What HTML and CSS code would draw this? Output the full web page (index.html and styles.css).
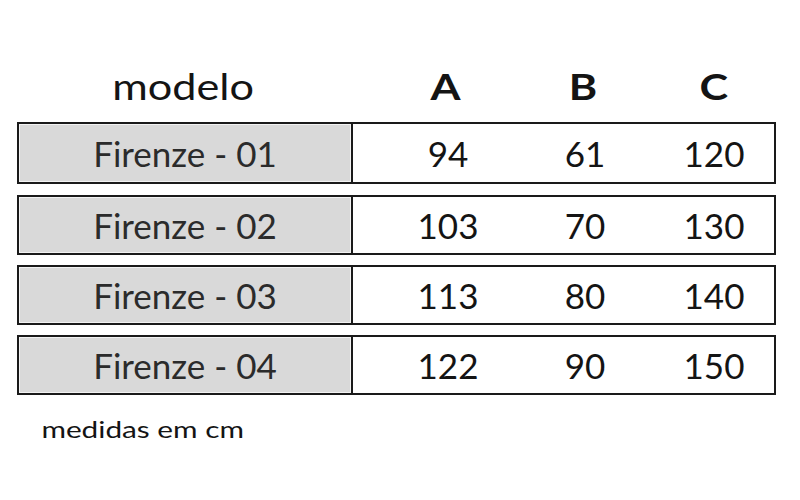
FILE: index.html
```html
<!DOCTYPE html>
<html lang="pt">
<head>
<meta charset="utf-8">
<title>Tabela de medidas</title>
<link rel="stylesheet" href="styles.css">
</head>
<body>
<div class="sheet">
  <div class="head">
    <div class="name-col"><span class="t">modelo</span></div>
    <div class="vals">
      <div class="v"><span class="t b">A</span></div>
      <div class="v"><span class="t b">B</span></div>
      <div class="v"><span class="t b">C</span></div>
    </div>
  </div>
  <div class="row first">
    <div class="name-col cell"><span>Firenze - 01</span></div>
    <div class="vals">
      <div class="v"><span>94</span></div>
      <div class="v"><span>61</span></div>
      <div class="v"><span>120</span></div>
    </div>
  </div>
  <div class="row">
    <div class="name-col cell"><span>Firenze - 02</span></div>
    <div class="vals">
      <div class="v"><span>103</span></div>
      <div class="v"><span>70</span></div>
      <div class="v"><span>130</span></div>
    </div>
  </div>
  <div class="row">
    <div class="name-col cell"><span>Firenze - 03</span></div>
    <div class="vals">
      <div class="v"><span>113</span></div>
      <div class="v"><span>80</span></div>
      <div class="v"><span>140</span></div>
    </div>
  </div>
  <div class="row">
    <div class="name-col cell"><span>Firenze - 04</span></div>
    <div class="vals">
      <div class="v"><span>122</span></div>
      <div class="v"><span>90</span></div>
      <div class="v"><span>150</span></div>
    </div>
  </div>
  <div class="note"><span class="t wide">medidas em cm</span></div>
</div>
</body>
</html>
```
FILE: styles.css
```css
* { box-sizing: border-box; }
html, body { margin: 0; padding: 0; background: #fff; }
body {
  font-family: Lato, "Open Sans", sans-serif;
  color: #141414;
  width: 800px;
  height: 500px;
  overflow: hidden;
}
.sheet {
  padding: 60px 0 0 17px;
  width: 776px;
}
.t {
  display: inline-block;
  transform: scaleX(1.2);
}
.t.wide { transform: scaleX(1.24); }
.b { font-weight: 700; }
.head {
  display: flex;
  height: 52px;
  align-items: center;
  font-size: 36px;
  margin-bottom: 10px;
}
.head .name-col { border-right: 2px solid transparent; }
.name-col {
  width: 334px;
  flex: none;
  text-align: center;
}
.vals {
  display: flex;
  flex: 1;
  padding-left: 27px;
  height: 100%;
  align-items: center;
}
.v { text-align: center; }
.v:nth-child(1) { width: 136px; }
.v:nth-child(2) { width: 138px; }
.v:nth-child(3) { flex: 1; }
.row {
  display: flex;
  height: 60px;
  border: 2px solid #1a1a1a;
  margin-bottom: 10px;
  font-size: 35px;
}
.row.first { height: 62px; margin-bottom: 11px; }
.cell {
  display: flex;
  align-items: center;
  justify-content: center;
  background: #d9d9d9;
  border-right: 2px solid #1a1a1a;
  box-shadow: inset 0 0 0 1px #f2f2f2;
  color: #2b2b2b;
}
.note {
  margin-top: 19px;
  padding-left: 44px;
  font-size: 24px;
  line-height: 30px;
}
```
